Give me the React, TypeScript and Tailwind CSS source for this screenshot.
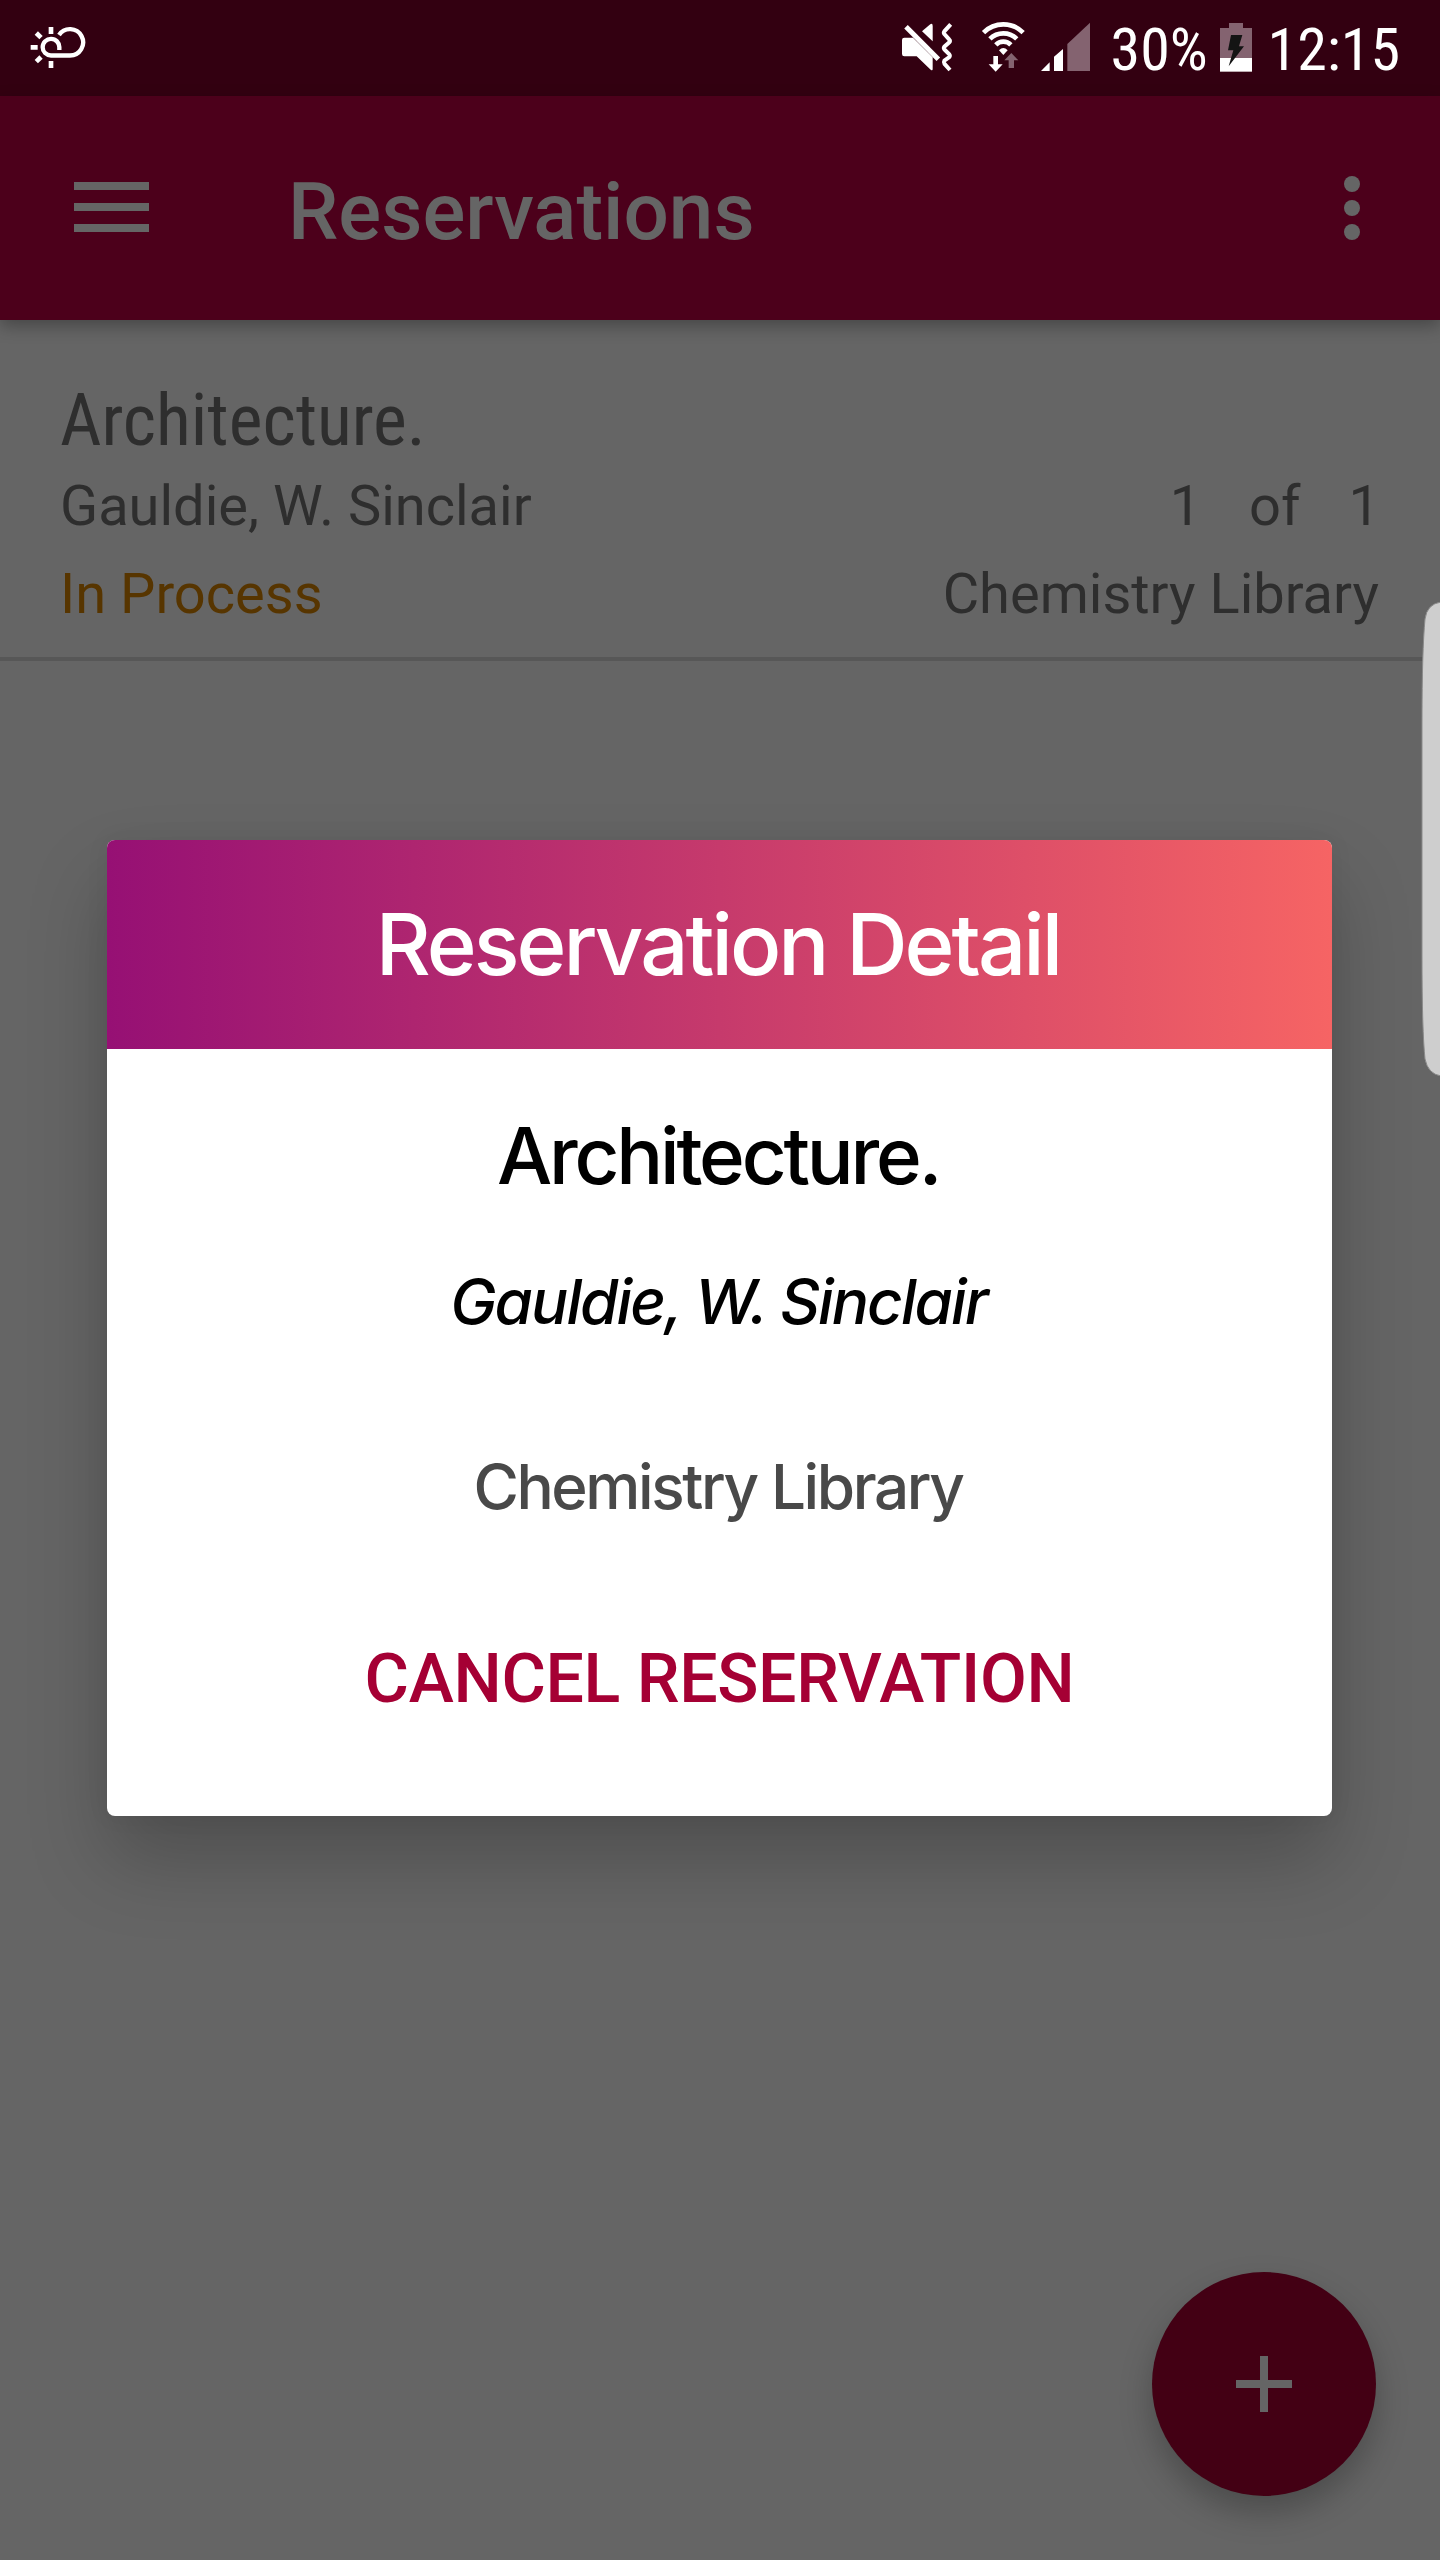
import type { ReactNode } from "react";

function StatusIcon({ viewBox, className, children }: { viewBox: string; className: string; children: ReactNode }) {
  return (
    <svg viewBox={viewBox} className={`block h-24 shrink-0 ${className}`} fill="none" aria-hidden="true">
      {children}
    </svg>
  );
}

function WeatherIcon() {
  return (
    <StatusIcon viewBox="90 0 168 288" className="w-14">
      <path d="M178 150V142A25 25 0 1 0 153 166.500H210A39.500 39.500 0 1 0 177 105" stroke="#fff" strokeWidth="13" />
      <g fill="#fff">
        <path d="M146 81h14v21h-14zM146 183h14v21h-14zM92 135h21v14h-21z" />
        <path d="M-7-10h14v20h-14z" transform="translate(116 106) rotate(-45)" />
        <path d="M-7-10h14v20h-14z" transform="translate(116 178) rotate(45)" />
      </g>
    </StatusIcon>
  );
}

function MuteVibrateIcon() {
  return (
    <StatusIcon viewBox="63 0 159 288" className="w-[53px]">
      <path d="M73 113H99L158 172V207Q158 214 152 209L110 169H73Q66 169 66 162V120Q66 113 73 113Z" fill="#fff" />
      <path d="M78 80L175 178" stroke="#fff" strokeWidth="15" />
      <path d="M126 94L149 74Q158 67 158 77V124Z" fill="#fff" />
      <path d="M212 73L193 94Q190 98 193 102L208 119Q212 123 208 127L193 140Q190 144 193 148L208 163Q211 167 208 171L193 182Q190 187 193 191L210 210" stroke="#fff" strokeWidth="12" />
    </StatusIcon>
  );
}

function WifiIcon() {
  return (
    <StatusIcon viewBox="303 0 135 288" className="w-[45px]">
      <g stroke="#fff" strokeWidth="14">
        <path d="M310.600 97.600A84 84 0 0 1 429.400 97.600" />
        <path d="M329.700 116.700A57 57 0 0 1 410.300 116.700" />
        <path d="M347.400 134.400A32 32 0 0 1 392.600 134.400" />
      </g>
      <path d="M357 151Q370 137 383 151L370 165Z" fill="#fff" />
      <path d="M340 168h14v25h14l-21 22l-21-22h14z" fill="#fff" />
      <path d="M386 204v-23h-13l21-22l21 22h-13v23z" fill="#846370" />
    </StatusIcon>
  );
}

function SignalIcon() {
  return (
    <StatusIcon viewBox="480 0 153 288" className="w-[51px]">
      <path d="M483 213L509 187V213ZM522 213V170L549 147V213Z" fill="#fff" />
      <path d="M562 213V132L630 68V213Z" fill="#846370" />
    </StatusIcon>
  );
}

function BatteryIcon() {
  return (
    <StatusIcon viewBox="360 0 96 288" className="w-8">
      <path d="M360 84H387V69H429V84H456V174H360Z" fill="#846370" />
      <path d="M360 174H456V215H360Z" fill="#fff" />
      <path d="M393 105H427L417 139H432L386 199L400 151H384Z" fill="#141414" />
    </StatusIcon>
  );
}

function StatusBar() {
  return (
    <div className="flex h-24 items-center bg-[#330011] pr-10 pl-[30px] font-['Roboto_Condensed',Roboto,sans-serif] text-[60px] leading-[72px] text-white">
      <WeatherIcon />
      <div className="ml-auto flex items-center">
        <MuteVibrateIcon />
        <div className="ml-[27px]"><WifiIcon /></div>
        <div className="ml-[14px]"><SignalIcon /></div>
        <span className="ml-5 w-[97px] pt-[3px] whitespace-nowrap">30%</span>
        <div className="ml-3"><BatteryIcon /></div>
        <span className="ml-4 pt-[3px]">12:15</span>
      </div>
    </div>
  );
}

function AppBar() {
  return (
    <header className="relative flex h-56 items-center bg-[#4c001b] pr-20 pl-[74px] shadow-[0_6px_16px_rgba(0,0,0,0.3)]">
      <button aria-label="Menu" className="flex flex-col gap-[13px] pb-0.5">
        <span className="h-2 w-[75px] bg-[#656565]" />
        <span className="h-2 w-[75px] bg-[#656565]" />
        <span className="h-2 w-[75px] bg-[#656565]" />
      </button>
      <h1 className="ml-[139px] pt-[7px] text-[80px] leading-[96px] font-medium text-[#656565]">Reservations</h1>
      <button aria-label="More options" className="ml-auto flex flex-col gap-2">
        <span className="size-4 rounded-full bg-[#656565]" />
        <span className="size-4 rounded-full bg-[#656565]" />
        <span className="size-4 rounded-full bg-[#656565]" />
      </button>
    </header>
  );
}

function ReservationRow() {
  return (
    <section className="border-b-4 border-[#575757] px-[60px] pt-[59px] pb-[30px] text-[56px] leading-[66px] text-[#2e2e2e]">
      <h2 className="font-['Roboto_Condensed',Roboto,sans-serif] text-[72px] leading-[84px]">Architecture.</h2>
      <div className="mt-2.5 flex justify-between">
        <span>Gauldie, W. Sinclair</span>
        <span className="flex gap-12">
          <span>1</span>
          <span>of</span>
          <span>1</span>
        </span>
      </div>
      <div className="mt-[22px] flex justify-between">
        <span className="text-[#573500]">In Process</span>
        <span className="pr-px">Chemistry Library</span>
      </div>
    </section>
  );
}

function ReservationDialog() {
  return (
    <div className="absolute inset-0 flex items-center justify-center pt-24 pr-px">
      <div
        role="dialog"
        className="flex h-[976px] w-[1225px] flex-col overflow-hidden rounded-lg bg-white text-center font-[Inter,sans-serif] font-medium whitespace-nowrap text-black shadow-[0_44px_80px_rgba(0,0,0,0.22),0_0_24px_rgba(0,0,0,0.06)]"
      >
        <div className="flex h-[209px] items-center justify-center bg-linear-to-r/srgb from-[#961074] to-[#f66464] pr-[3px] text-[85px] leading-[104px] tracking-[-2.95px] text-white">
          Reservation Detail
        </div>
        <h3 className="mt-[59px] pr-[3px] text-[78px] leading-[96px] tracking-[-3.2px]">Architecture.</h3>
        <p className="mt-[60px] pr-0.5 text-[62px] leading-[76px] tracking-[-1.95px] italic">Gauldie, W. Sinclair</p>
        <p className="mt-[109px] pr-[3px] text-[62px] leading-[76px] tracking-[-2.4px] text-[#494949]">Chemistry Library</p>
        <button className="mt-[114px] font-[Roboto,sans-serif] text-[68px] leading-[80px] tracking-[-0.3px] text-[#a50034]">
          CANCEL RESERVATION
        </button>
      </div>
    </div>
  );
}

function EdgeHandle() {
  return (
    <svg viewBox="0 0 20 476" className="absolute top-[601px] right-0 h-[476px] w-5" aria-hidden="true">
      <path d="M21 1Q7 3 5 18Q2 50 2 120V356Q2 430 5 458Q8 473 21 475Z" fill="#cecece" stroke="#8a8a8a" strokeWidth="1" />
    </svg>
  );
}

function AddButton() {
  return (
    <button
      aria-label="Add"
      className="absolute right-16 bottom-16 flex size-56 items-center justify-center rounded-full bg-[#430014] shadow-[0_16px_32px_rgba(0,0,0,0.25)]"
    >
      <svg viewBox="0 0 56 56" className="size-14" aria-hidden="true">
        <path d="M24 0h8v24h24v8h-24v24h-8v-24h-24v-8h24z" fill="#656565" />
      </svg>
    </button>
  );
}

export default function App() {
  return (
    <main className="relative h-[2560px] w-[1440px] overflow-hidden bg-[#656565] font-[Roboto,sans-serif]">
      <StatusBar />
      <AppBar />
      <ReservationRow />
      <AddButton />
      <ReservationDialog />
      <EdgeHandle />
    </main>
  );
}
